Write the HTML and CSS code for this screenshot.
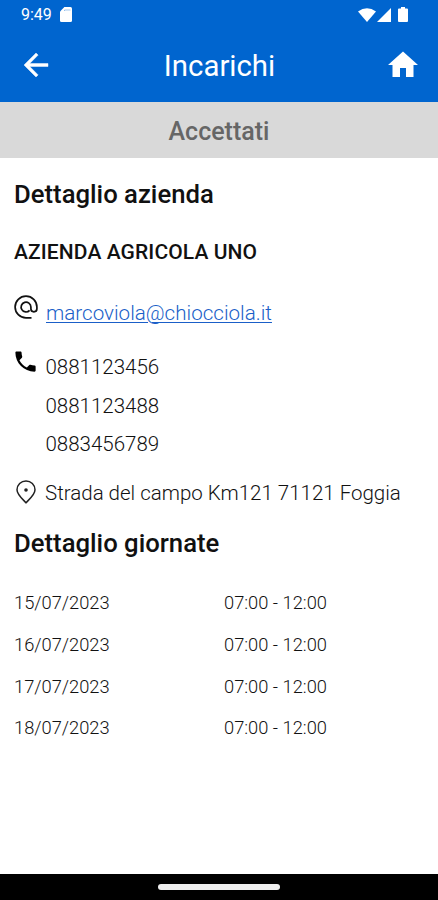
FILE: index.html
```html
<!DOCTYPE html>
<html lang="it">

<head>
    <meta charset="UTF-8">
    <meta name="viewport" content="width=device-width, initial-scale=1.0">
    <title>Incarichi</title>
    <link rel="stylesheet" href="styles.css">
</head>

<body>
    <div class="status-bar">
        <span class="clock">9:49</span>
        <svg class="sd-icon" width="12" height="15" viewBox="0 0 12 15">
            <path d="M4.4 0H10.5Q12 0 12 1.5V13.5Q12 15 10.5 15H1.5Q0 15 0 13.5V4.6Z" fill="#fff"/>
            <path d="M4.5 4V3H10.5" fill="none" stroke="#0065cf" stroke-width="0.6" opacity="0.6"/>
        </svg>
        <div class="status-icons">
            <svg width="18" height="14" viewBox="0 0 18 14">
                <path d="M0 3.6Q9-3.2 18 3.6L9 14Z" fill="#fff"/>
            </svg>
            <svg class="signal-icon" width="14" height="14" viewBox="0 0 14 14">
                <path d="M14 0V14H0Z" fill="#fff"/>
            </svg>
            <svg class="battery-icon" width="10" height="15" viewBox="0 0 10 15">
                <path d="M3 0H7V1.5H9Q10 1.5 10 2.5V14Q10 15 9 15H1Q0 15 0 14V2.5Q0 1.5 1 1.5H3Z" fill="#fff"/>
            </svg>
        </div>
    </div>

    <header class="header">
        <svg class="back-icon" width="36" height="36" viewBox="0 0 24 24">
            <path d="M20 11H7.83l5.59-5.59L12 4l-8 8 8 8 1.41-1.41L7.83 13H20v-2z" fill="#fff" stroke="#fff" stroke-width="0.3"/>
        </svg>
        <h1>Incarichi</h1>
        <svg class="home-icon" width="36" height="36" viewBox="0 0 24 24">
            <path d="M10 20v-6h4v6h5v-8h3L12 3 2 12h3v8z" fill="#fff"/>
        </svg>
    </header>
    <div class="state">Accettati</div>

    <main class="content">
        <h2>Dettaglio azienda</h2>
        <h3>AZIENDA AGRICOLA UNO</h3>

        <div class="row mail-row">
            <svg class="row-icon mail-icon" width="24" height="24" viewBox="0 0 24 24">
                <path d="M17.5 22.9H12A10.9 10.9 0 1 1 22.9 12V13.8A3 3 0 0 1 16.9 13.8V12A4.9 4.9 0 1 0 15.6 15.4" fill="none" stroke="#111" stroke-width="1.7"/>
            </svg>
            <a class="mail" href="mailto:marcoviola@chiocciola.it">marcoviola@chiocciola.it</a>
        </div>

        <div class="row phone-row">
            <svg class="row-icon phone-icon" width="27" height="27" viewBox="0 0 24 24">
                <path d="M6.62 10.79c1.44 2.83 3.76 5.14 6.59 6.59l2.2-2.2c.27-.27.67-.36 1.02-.24 1.12.37 2.33.57 3.57.57.55 0 1 .45 1 1V20c0 .55-.45 1-1 1-9.39 0-17-7.61-17-17 0-.55.45-1 1-1h3.5c.55 0 1 .45 1 1 0 1.25.2 2.45.57 3.57.11.35.03.74-.25 1.02l-2.2 2.2z" fill="#000"/>
            </svg>
            <div class="phones">
                <div>0881123456</div>
                <div>0881123488</div>
                <div>0883456789</div>
            </div>
        </div>

        <div class="row address-row">
            <svg class="row-icon pin-icon" width="20" height="24" viewBox="0 0 20 24">
                <path d="M10 22.8C7 19.4 1 14.8 1 9.8A9 8.9 0 0 1 19 9.8C19 14.8 13 19.4 10 22.8Z" fill="none" stroke="#222" stroke-width="1.5"/>
                <circle cx="10" cy="10" r="1.8" fill="#222"/>
            </svg>
            <div class="address">Strada del campo Km121 71121 Foggia</div>
        </div>

        <h2 class="days-title">Dettaglio giornate</h2>
        <div class="days">
            <div>15/07/2023</div>
            <div>07:00 - 12:00</div>
            <div>16/07/2023</div>
            <div>07:00 - 12:00</div>
            <div>17/07/2023</div>
            <div>07:00 - 12:00</div>
            <div>18/07/2023</div>
            <div>07:00 - 12:00</div>
        </div>
    </main>

    <div class="nav-bar">
        <div class="nav-handle"></div>
    </div>
</body>

</html>
```
FILE: styles.css
```css
* {
    box-sizing: border-box;
}

body {
    margin: 0;
    height: 900px;
    display: flex;
    flex-direction: column;
    overflow: hidden;
    background-color: #fff;
    color: #111;
    font-family: Roboto, "Liberation Sans", sans-serif;
}

svg {
    display: block;
    flex: none;
}

.status-bar {
    height: 29px;
    padding: 0 30px 0 21px;
    display: flex;
    align-items: center;
    background-color: #0065cf;
    color: #fff;
}

.clock {
    width: 39px;
    font-size: 16px;
    line-height: 29px;
}

.status-icons {
    margin-left: auto;
    display: flex;
    align-items: center;
}

.signal-icon {
    margin-left: 1px;
}

.battery-icon {
    margin-left: 7px;
}

.header {
    height: 73px;
    padding: 0 17px 0 18px;
    display: flex;
    align-items: center;
    justify-content: space-between;
    background-color: #0065cf;
    color: #fff;
}

.home-icon,
.back-icon {
    margin-top: -1px;
}

h1 {
    margin: 0;
    padding-top: 2px;
    font-size: 29.4px;
    font-weight: 400;
    line-height: 41px;
}

.state {
    height: 56px;
    line-height: 59px;
    text-align: center;
    background-color: #d9d9d9;
    color: #666;
    font-size: 25px;
    font-weight: 500;
}

.content {
    flex: 1;
    padding: 21px 14px 0;
}

h2 {
    margin: 0;
    font-size: 25.7px;
    font-weight: 500;
    line-height: 30px;
}

h3 {
    margin: 31px 0 0;
    font-size: 21px;
    font-weight: 500;
    line-height: 25px;
    letter-spacing: 0.1px;
}

.row {
    display: flex;
    align-items: flex-start;
    font-size: 20.5px;
    font-weight: 300;
    line-height: 38.5px;
}

.mail-row {
    margin-top: 29px;
}

.mail-icon {
    margin: 1px 8px 0 0;
}

.mail {
    font-size: 20.6px;
    color: #1a5fc8;
    text-decoration-thickness: 1px;
    text-underline-offset: 2px;
}

.phone-row {
    margin-top: 15.5px;
}

.phone-icon {
    margin: 0 6.5px 0 -2px;
}

.address-row {
    margin-top: 10px;
}

.pin-icon {
    margin: 6px 9px 0 2px;
}

.days-title {
    margin-top: 16px;
}

.days {
    margin-top: 24px;
    display: grid;
    grid-template-columns: 210px 1fr;
    font-size: 18.3px;
    font-weight: 300;
    line-height: 41.8px;
}

.nav-bar {
    height: 26px;
    display: flex;
    align-items: center;
    justify-content: center;
    background-color: #000;
}

.nav-handle {
    width: 122px;
    height: 6px;
    border-radius: 3px;
    background-color: #eee;
}
```
